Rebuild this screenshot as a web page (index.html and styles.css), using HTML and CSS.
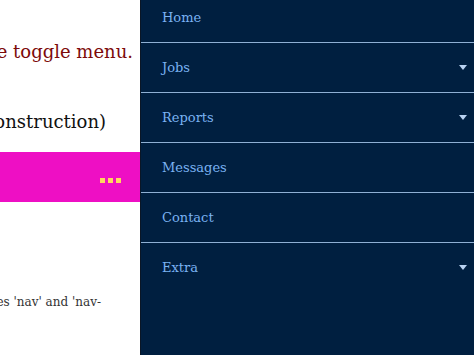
FILE: index.html
```html
<!DOCTYPE html>
<html>
<head>
<meta charset="utf-8">
<link rel="stylesheet" href="styles.css">
</head>
<body>
<div class="page">
  <main class="main">
    <div class="line title"><span>Click the button to see the toggle menu.</span></div>
    <div class="line subtitle"><span>Navigation (Under construction)</span></div>
    <div class="bar">
      <div class="dots"><i></i><i></i><i></i></div>
    </div>
    <div class="line note"><span>This example uses classes 'nav' and 'nav-</span></div>
  </main>
  <nav class="nav">
    <div class="item"><span>Home</span></div>
    <div class="item"><span>Jobs</span><b class="caret"></b></div>
    <div class="item"><span>Reports</span><b class="caret"></b></div>
    <div class="item"><span>Messages</span></div>
    <div class="item"><span>Contact</span></div>
    <div class="item last"><span>Extra</span><b class="caret"></b></div>
  </nav>
</div>
</body>
</html>
```
FILE: styles.css
```css
html, body {
  margin: 0;
  padding: 0;
  height: 100%;
  background: #ffffff;
}
body {
  font-family: "DejaVu Serif", "Liberation Serif", serif;
}
.page {
  display: flex;
  height: 355px;
  overflow: hidden;
}
.main {
  width: 140px;
  flex: none;
  overflow: hidden;
  background: #ffffff;
}
.line {
  display: flex;
  justify-content: flex-end;
  white-space: nowrap;
}
.title {
  color: #7d0a0a;
  font-size: 18px;
  padding-right: 7px;
  margin-top: 40px;
  height: 24px;
  line-height: 24px;
}
.subtitle {
  color: #111111;
  font-size: 18px;
  padding-right: 34px;
  margin-top: 46px;
  height: 24px;
  line-height: 24px;
}
.bar {
  margin-top: 18px;
  height: 50px;
  background: #ee0fc4;
  display: flex;
  justify-content: flex-end;
  align-items: center;
  padding-right: 19px;
}
.dots {
  display: flex;
  gap: 3px;
  margin-top: 6px;
}
.dots i {
  display: block;
  width: 5px;
  height: 5px;
  background: #ffd75e;
}
.note {
  color: #333333;
  font-size: 12px;
  padding-right: 39px;
  margin-top: 92px;
  height: 16px;
  line-height: 16px;
}
.nav {
  flex: 1;
  background: #001f40;
  border-left: 1px solid #0a1626;
  margin-top: -7px;
}
.item {
  height: 49px;
  border-bottom: 1px solid #8fb0d4;
  display: flex;
  align-items: center;
  justify-content: space-between;
  padding: 0 7px 0 21px;
  color: #7ab2f2;
  font-size: 13px;
}
.item.last {
  border-bottom: none;
}
.caret {
  width: 0;
  height: 0;
  border-left: 4px solid transparent;
  border-right: 4px solid transparent;
  border-top: 5px solid #b9d3f2;
}
```
